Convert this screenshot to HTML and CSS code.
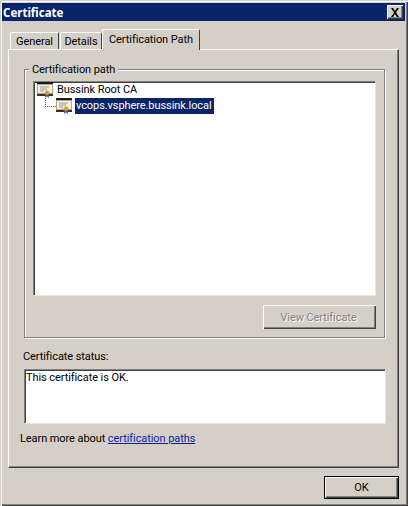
FILE: index.html
```html
<!DOCTYPE html>
<html lang="en">
<head>
<meta charset="utf-8">
<title>Certificate</title>
<link rel="stylesheet" href="styles.css">
</head>
<body>
<svg class="defs" width="0" height="0" aria-hidden="true">
  <symbol id="cert" viewBox="0 0 16 16">
    <rect x="0" y="0" width="16" height="2" fill="#1a1a1a"/>
    <rect x="0" y="12" width="16" height="2" fill="#3a3226"/>
    <rect x="0" y="2" width="16" height="10" fill="#f4efdc"/>
    <rect x="0.5" y="2.5" width="15" height="9" fill="none" stroke="#b0a68a"/>
    <path d="M3 5h9M3 7h7M3 9h4" stroke="#8c9ab4" stroke-width="1"/>
    <path d="M8.500 12l-.5 4 2-1.500 2 1.500-.5-4z" fill="#2f62c8"/>
    <circle cx="10" cy="10.500" r="2.300" fill="#eca818"/>
    <circle cx="10" cy="10.500" r=".8" fill="#c88410"/>
  </symbol>
</svg>
<main class="window">
  <header class="titlebar">
    <span class="title">Certificate</span>
    <span class="close">
      <svg width="10" height="9" viewBox="0 0 10 9"><path d="M1 0h2l2 3 2-3h2L6 4.500 9 9H7L5 6 3 9H1l3-4.500z" fill="#000"/></svg>
    </span>
  </header>
  <nav class="tabs">
    <span class="tab tab-general">General</span>
    <span class="tab tab-details">Details</span>
    <span class="tab tab-active">Certification Path</span>
  </nav>
  <section class="panel">
    <div class="group">
      <span class="legend">Certification path</span>
      <div class="tree sunken">
        <div class="node">
          <svg class="icon"><use href="#cert"/></svg>
          <span class="node-label">Bussink Root CA</span>
        </div>
        <div class="node node-child">
          <span class="connector"></span>
          <svg class="icon"><use href="#cert"/></svg>
          <span class="node-label selected">vcops.vsphere.bussink.local</span>
        </div>
      </div>
      <div class="group-actions">
        <span class="button button-disabled">View Certificate</span>
      </div>
    </div>
    <div class="status-label">Certificate status:</div>
    <div class="status-box sunken">This certificate is OK.</div>
    <p class="learn">Learn more about <a href="#">certification paths</a></p>
  </section>
  <div class="footer">
    <span class="button button-default">OK</span>
  </div>
</main>
</body>
</html>
```
FILE: styles.css
```css
* { box-sizing: border-box; }
html, body { margin: 0; padding: 0; }
body {
  width: 408px;
  height: 506px;
  overflow: hidden;
  font-family: Roboto, "Noto Sans", sans-serif;
  font-size: 11px;
  letter-spacing: -0.08px;
  color: #000;
  background: #d4d0c8;
}
.defs { position: absolute; }
.window {
  width: 408px;
  height: 506px;
  padding: 3px 2px 0;
  background: #d4d0c8;
  box-shadow: inset 1px 1px 0 #d4d0c8, inset 2px 2px 0 #fff, inset -1px -1px 0 #404040, inset -2px -2px 0 #808080;
}
.titlebar {
  height: 18px;
  margin-right: 1px;
  background: #0a246a;
  display: flex;
  align-items: center;
  justify-content: space-between;
  padding: 0 2px 0 1px;
}
.title {
  font-family: "Noto Sans", sans-serif;
  font-weight: 700;
  font-size: 11.500px;
  letter-spacing: 0;
  color: #fff;
}
.close {
  width: 16px;
  height: 14px;
  background: #d4d0c8;
  display: flex;
  align-items: center;
  justify-content: center;
  box-shadow: inset 1px 1px 0 #fff, inset -1px -1px 0 #404040, inset -2px -2px 0 #808080;
}
.tabs {
  height: 21px;
  margin: 7px 0 0 8px;
  display: flex;
  align-items: flex-end;
  position: relative;
  z-index: 1;
}
.tab {
  height: 17px;
  display: flex;
  align-items: center;
  justify-content: center;
  background: #d4d0c8;
  border-radius: 2px 2px 0 0;
  border-left: 1px solid #fff;
  border-top: 1px solid #fff;
  border-right: 1px solid #404040;
}
.tab-general { width: 49px; }
.tab-details { width: 42px; margin-left: 1px; }
.tab-active {
  width: 98px;
  height: 21px;
  margin-bottom: -1px;
  padding-bottom: 2px;
}
.panel {
  width: 391px;
  height: 419px;
  margin-left: 6px;
  padding: 19px 13px 0 15px;
  border-top: 1px solid #fff;
  border-left: 1px solid #fff;
  border-right: 1px solid #404040;
  border-bottom: 1px solid #404040;
  box-shadow: inset -1px -1px 0 #808080;
}
.group {
  position: relative;
  height: 269px;
  padding: 11px 9px 0 8px;
  border: 1px solid #808080;
  box-shadow: 1px 1px 0 #fff, inset 1px 1px 0 #fff;
}
.legend {
  position: absolute;
  left: 4px;
  top: -7px;
  padding: 0 3px;
  line-height: 13px;
  background: #d4d0c8;
}
.sunken {
  background: #fff;
  border-top: 1px solid #808080;
  border-left: 1px solid #808080;
  box-shadow: 1px 1px 0 #e8e6e0, inset 1px 1px 0 #404040;
}
.tree {
  height: 214px;
  padding: 0 0 0 3px;
}
.node {
  height: 16px;
  display: flex;
  align-items: center;
  position: relative;
}
.node-child { padding-left: 19px; }
.icon { width: 16px; height: 16px; flex: none; }
.node-label {
  margin-left: 3px;
  padding: 0 1px;
  height: 16px;
  line-height: 15px;
  white-space: nowrap;
}
.selected {
  background: #0a246a;
  color: #fff;
  width: 139px;
}
.connector {
  position: absolute;
  left: 8px;
  top: 0;
  width: 11px;
  height: 9px;
  border-left: 1px dotted #606060;
  border-bottom: 1px dotted #606060;
}
.group-actions {
  margin: 10px -1px 0 0;
  display: flex;
  justify-content: flex-end;
}
.button {
  height: 24px;
  display: flex;
  align-items: center;
  justify-content: center;
  background: #d4d0c8;
  box-shadow: inset 1px 1px 0 #fff, inset -1px -1px 0 #404040, inset -2px -2px 0 #808080;
}
.button-disabled {
  width: 113px;
  padding-right: 2px;
  color: #808080;
  text-shadow: 1px 1px 0 #fff;
}
.status-label {
  margin: 12px 0 0 -1px;
  line-height: 13px;
}
.status-box {
  margin-top: 6px;
  height: 54px;
  width: 361px;
  padding: 1px 0 0 1px;
  line-height: 14px;
}
.learn {
  margin: 9px 0 0 -4px;
  line-height: 13px;
}
.learn a { color: #0a1ea8; text-decoration: underline; }
.footer {
  margin-top: 8px;
  width: 397px;
  display: flex;
  justify-content: flex-end;
}
.button-default {
  width: 75px;
  height: 23px;
  border: 1px solid #000;
}
```
